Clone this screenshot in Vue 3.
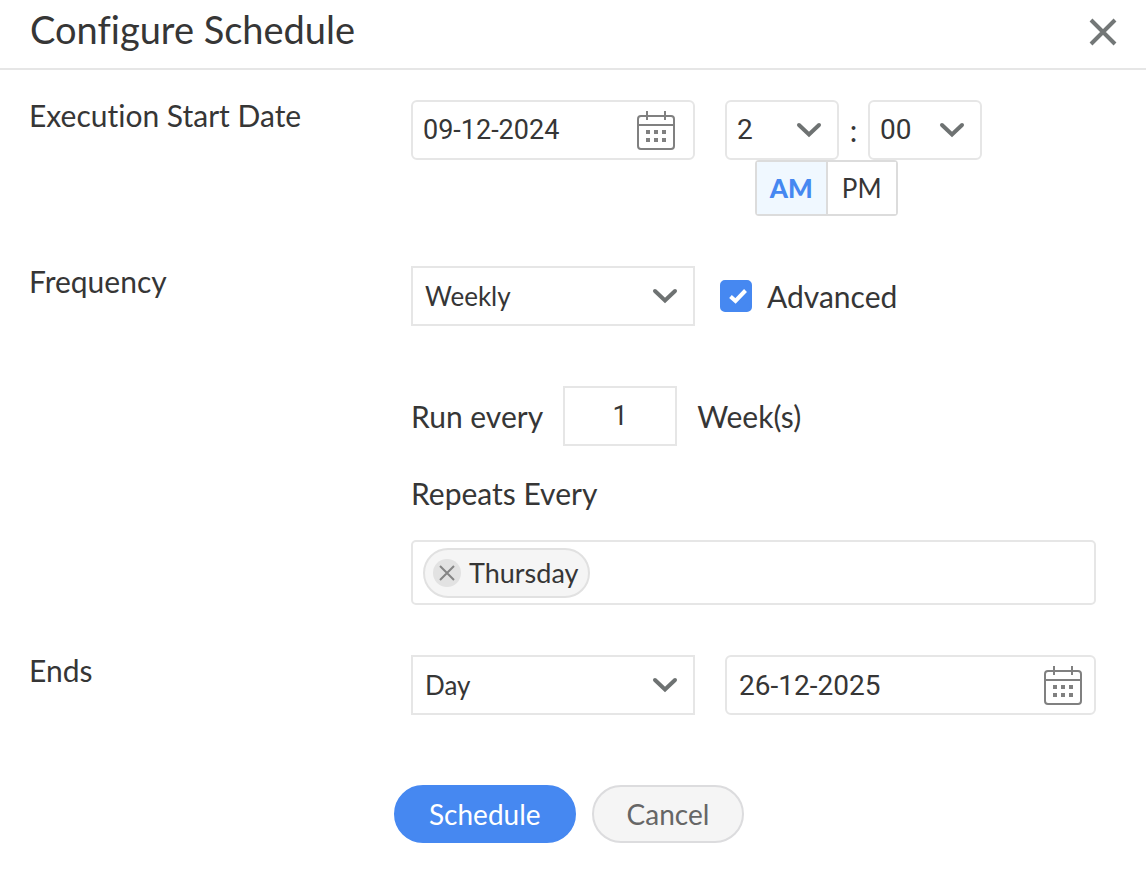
<script setup>
import { ref } from 'vue'

const startDate = ref('09-12-2024')
const hour = ref('2')
const minute = ref('00')
const meridiem = ref('AM')
const frequency = ref('Weekly')
const advanced = ref(true)
const interval = ref('1')
const days = ref(['Thursday'])
const endType = ref('Day')
const endDate = ref('26-12-2025')

const hours = Array.from({ length: 12 }, (_, i) => String(i + 1))
const minutes = ['00', '15', '30', '45']

function removeDay(day) {
  days.value = days.value.filter((d) => d !== day)
}
</script>

<template>
  <main class="dialog" role="dialog" aria-labelledby="dialog-title">
    <header class="header">
      <h1 id="dialog-title">Configure Schedule</h1>
      <button class="close" type="button" aria-label="Close">
        <svg width="28" height="28" viewBox="0 0 28 28"><path d="M2 2 26 26M26 2 2 26" /></svg>
      </button>
    </header>

    <form class="form" @submit.prevent>
      <div class="row">
        <label class="label" for="start-date">Execution Start Date</label>
        <div class="fields">
          <div class="control rounded">
            <input id="start-date" v-model="startDate" class="start" type="text" />
            <svg class="calendar" width="38" height="40" viewBox="0 0 38 40">
              <rect x="1" y="5" width="36" height="33" rx="3" />
              <path d="M1 14H37M10 0V9M28 0V9" />
              <path class="dots" d="M9 19h4v4h-4zM17 19h4v4h-4zM25 19h4v4h-4zM9 27h4v4h-4zM17 27h4v4h-4zM25 27h4v4h-4z" />
            </svg>
          </div>
          <div class="time">
            <div class="clock">
              <div class="control rounded short">
                <select v-model="hour" aria-label="Hour">
                  <option v-for="h in hours" :key="h">{{ h }}</option>
                </select>
                <svg class="chevron" width="26" height="16" viewBox="0 0 26 16"><path d="M3 3 13 12.500 23 3" /></svg>
              </div>
              <span class="colon">:</span>
              <div class="control rounded short">
                <select v-model="minute" aria-label="Minute">
                  <option v-for="m in minutes" :key="m">{{ m }}</option>
                </select>
                <svg class="chevron" width="26" height="16" viewBox="0 0 26 16"><path d="M3 3 13 12.500 23 3" /></svg>
              </div>
            </div>
            <div class="meridiem">
              <button
                v-for="m in ['AM', 'PM']"
                :key="m"
                type="button"
                :class="{ active: meridiem === m }"
                :aria-pressed="meridiem === m"
                @click="meridiem = m"
              >{{ m }}</button>
            </div>
          </div>
        </div>
      </div>

      <div class="row">
        <label class="label" for="frequency">Frequency</label>
        <div class="stack">
          <div class="inline">
            <div class="control wide">
              <select id="frequency" v-model="frequency">
                <option>Daily</option>
                <option>Weekly</option>
                <option>Monthly</option>
              </select>
              <svg class="chevron" width="26" height="16" viewBox="0 0 26 16"><path d="M3 3 13 12.500 23 3" /></svg>
            </div>
            <label class="check">
              <span class="box">
                <input v-model="advanced" type="checkbox" />
                <svg v-if="advanced" width="32" height="32" viewBox="0 0 32 32"><path d="M10.500 16.500 15.500 21 25.500 10.500" /></svg>
              </span>
              Advanced
            </label>
          </div>
          <div class="every">
            <label for="interval">Run every</label>
            <input id="interval" v-model="interval" class="interval" type="text" />
            <span>Week(s)</span>
          </div>
          <div class="repeats">
            <span id="repeats-label">Repeats Every</span>
            <div class="tags" role="group" aria-labelledby="repeats-label">
              <span v-for="d in days" :key="d" class="tag">
                <button type="button" :aria-label="'Remove ' + d" @click="removeDay(d)">
                  <svg width="16" height="16" viewBox="0 0 16 16"><path d="M1 1 15 15M15 1 1 15" /></svg>
                </button>
                {{ d }}
              </span>
            </div>
          </div>
        </div>
      </div>

      <div class="row">
        <label class="label" for="end-type">Ends</label>
        <div class="fields">
          <div class="control">
            <select id="end-type" v-model="endType">
              <option>Never</option>
              <option>Day</option>
            </select>
            <svg class="chevron" width="26" height="16" viewBox="0 0 26 16"><path d="M3 3 13 12.500 23 3" /></svg>
          </div>
          <div class="control rounded">
            <input v-model="endDate" class="end" type="text" aria-label="End date" />
            <svg class="calendar" width="38" height="40" viewBox="0 0 38 40">
              <rect x="1" y="5" width="36" height="33" rx="3" />
              <path d="M1 14H37M10 0V9M28 0V9" />
              <path class="dots" d="M9 19h4v4h-4zM17 19h4v4h-4zM25 19h4v4h-4zM9 27h4v4h-4zM17 27h4v4h-4zM25 27h4v4h-4z" />
            </svg>
          </div>
        </div>
      </div>

      <footer class="actions">
        <button class="primary" type="submit">Schedule</button>
        <button class="secondary" type="button">Cancel</button>
      </footer>
    </form>
  </main>
</template>

<style>
body {
  margin: 0;
  background: #fff;
}
</style>

<style scoped>
* {
  box-sizing: border-box;
}
.dialog {
  font-family: Lato, "Liberation Sans", sans-serif;
  font-size: 30px;
  line-height: 30px;
  font-variant-ligatures: none;
  color: #363636;
}
button,
input,
select {
  font: inherit;
  color: inherit;
  margin: 0;
}
svg {
  fill: none;
  display: block;
  flex: none;
}
.header {
  display: flex;
  justify-content: space-between;
  align-items: center;
  height: 70px;
  padding: 0 29px 4px 30px;
  border-bottom: 2px solid #e6e6e6;
}
h1 {
  margin: 0;
  padding-bottom: 6px;
  font-size: 38px;
  line-height: 44px;
  font-weight: 400;
}
.close {
  padding: 0;
  border: 0;
  background: none;
}
.close svg {
  stroke: #737777;
  stroke-width: 4;
}
.form {
  display: flex;
  flex-direction: column;
  gap: 50px;
  padding: 30px 50px 36px 29px;
}
.row {
  display: grid;
  grid-template-columns: 382px minmax(0, 1fr);
}
.fields {
  display: grid;
  grid-template-columns: 284px minmax(0, 1fr);
  column-gap: 30px;
  align-items: start;
}
.control {
  position: relative;
  display: flex;
  align-items: center;
  height: 60px;
  border: 2px solid #e6e6e6;
  background: #fff;
}
.rounded {
  border-radius: 6px;
}
.wide {
  width: 284px;
}
.short {
  width: 114px;
}
.control input,
.control select {
  width: 100%;
  min-width: 0;
  height: 100%;
  padding: 0 12px;
  border: 0;
  outline: 0;
  background: transparent;
  appearance: none;
  font-size: 26px;
}
.control input,
.short select,
.interval {
  font-family: Roboto, "Liberation Sans", sans-serif;
}
.control .start {
  padding: 0 10px;
  font-size: 27px;
}
.control .end {
  font-size: 28px;
}
.short select {
  padding: 0 10px;
  font-size: 28px;
}
.calendar {
  margin: 2px 18px 0 0;
  stroke: #808080;
  stroke-width: 2;
}
.calendar .dots {
  fill: #808080;
  stroke: none;
}
.control:last-child .calendar {
  margin-right: 12px;
}
.chevron {
  position: absolute;
  right: 15px;
  top: 20px;
  pointer-events: none;
  stroke: #6e7272;
  stroke-width: 4;
  stroke-linecap: round;
}
.clock {
  display: flex;
  align-items: center;
}
.colon {
  width: 29px;
  text-align: center;
}
.meridiem {
  display: flex;
  width: 143px;
  height: 56px;
  margin-left: 30px;
  border: 2px solid #dcdcdc;
  border-radius: 4px;
}
.meridiem button {
  flex: 1;
  padding: 0;
  border: 0;
  background: #fff;
  font-size: 26px;
}
.meridiem button + button {
  border-left: 2px solid #dcdcdc;
}
.meridiem .active {
  background: #f0f8ff;
  color: #4688f1;
  font-weight: 900;
}
.stack {
  display: flex;
  flex-direction: column;
}
.inline {
  display: flex;
  align-items: center;
  gap: 25px;
}
.check {
  display: flex;
  align-items: center;
  gap: 15px;
}
.box {
  display: grid;
}
.box > * {
  grid-area: 1 / 1;
}
.box input {
  width: 32px;
  height: 32px;
  appearance: none;
  border: 2px solid #4688f1;
  border-radius: 5px;
}
.box input:checked {
  background: #4688f1;
}
.box svg {
  pointer-events: none;
  stroke: #fff;
  stroke-width: 4;
}
.every {
  display: flex;
  align-items: center;
  gap: 20px;
  margin-top: 60px;
}
.interval {
  width: 114px;
  height: 60px;
  padding: 0;
  border: 2px solid #e6e6e6;
  background: #fff;
  text-align: center;
  font-size: 27px;
}
.repeats {
  display: flex;
  flex-direction: column;
  gap: 32px;
  margin-top: 32px;
}
.tags {
  display: flex;
  align-items: center;
  height: 65px;
  padding: 0 10px;
  border: 2px solid #e6e6e6;
  border-radius: 5px;
}
.tag {
  display: flex;
  align-items: center;
  gap: 8px;
  height: 50px;
  padding: 0 10px 0 8px;
  border: 2px solid #e1e1e1;
  border-radius: 25px;
  background: #f5f5f5;
  font-size: 27px;
}
.tag button {
  display: grid;
  place-items: center;
  width: 28px;
  height: 28px;
  padding: 0;
  border: 0;
  border-radius: 50%;
  background: #e2e2e2;
}
.tag svg {
  stroke: #858585;
  stroke-width: 2;
}
.actions {
  display: flex;
  gap: 16px;
  margin: 20px 0 0 365px;
}
.actions button {
  height: 58px;
  padding: 0 33px;
  border: 2px solid #4688f1;
  border-radius: 29px;
  background: #4688f1;
  color: #fff;
  font-size: 28px;
}
.actions .secondary {
  border-color: #dcdcde;
  background: #f5f5f5;
  color: #666;
}
</style>
